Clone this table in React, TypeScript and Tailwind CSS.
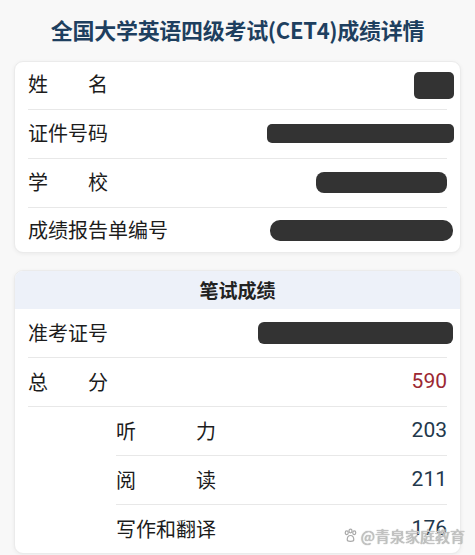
import React from 'react';

const Blot = ({ w, h, className = '' }: { w: string; h: string; className?: string }) => (
  <div className={`ml-auto ${w} ${h} bg-[#333333] rounded-[5px] ${className}`} />
);

const Paw = () => (
  <svg width="15" height="15" viewBox="0 0 16 16" className="mr-[3px]">
    <g fill="none" stroke="#a9a9a9" strokeWidth="1.3">
      <ellipse cx="4" cy="5" rx="1.6" ry="2" />
      <ellipse cx="8" cy="3.2" rx="1.6" ry="2" />
      <ellipse cx="12" cy="5" rx="1.6" ry="2" />
      <path d="M4.5 12.5c0-2.6 1.6-4.5 3.5-4.5s3.5 1.9 3.5 4.5c0 1.4-1.6 1.7-3.5 1.7s-3.5-.3-3.5-1.7z" />
    </g>
  </svg>
);

export default function App() {
  return (
    <div className="w-[475px] h-[555px] overflow-hidden bg-[#f8f8f8] font-['Noto_Sans_CJK_SC',sans-serif] text-[#1c1c1c]">
      {/* 标题 */}
      <div className="h-[61px] pt-[13px] text-center text-[22px] leading-[32px] font-bold text-[#1e3f5f] tracking-[-0.3px]">
        全国大学英语四级考试(CET4)成绩详情
      </div>

      {/* 个人信息 */}
      <div className="mx-[14px] bg-white border border-[#ebebeb] rounded-[9px] shadow-[0_1px_4px_rgba(0,0,0,0.06)] px-[13px]">
        <div className="h-[48px] flex items-center border-b border-[#e8e8e8] pb-[4px]">
          <span className="w-[80px] flex justify-between text-[20px]"><span>姓</span><span>名</span></span>
          <Blot w="w-[40px]" h="h-[27px]" className="mr-[-7px] mt-[3px]" />
        </div>
        <div className="h-[49px] flex items-center border-b border-[#e8e8e8] pb-[2px]">
          <span className="text-[20px]">证件号码</span>
          <Blot w="w-[187px]" h="h-[19px]" className="mr-[-7px]" />
        </div>
        <div className="h-[49px] flex items-center border-b border-[#e8e8e8] pb-[2px]">
          <span className="w-[80px] flex justify-between text-[20px]"><span>学</span><span>校</span></span>
          <Blot w="w-[131px]" h="h-[21px]" className="rounded-[8px]" />
        </div>
        <div className="h-[44px] flex items-center">
          <span className="text-[20px]">成绩报告单编号</span>
          <Blot w="w-[183px]" h="h-[21px]" className="mr-[-6px] rounded-[10px]" />
        </div>
      </div>

      {/* 笔试成绩 */}
      <div className="relative mt-[17px] mx-[14px] bg-white border border-[#ebebeb] rounded-[9px] shadow-[0_1px_4px_rgba(0,0,0,0.06)]">
        <div className="h-[38px] rounded-t-[8px] bg-[#edf1f9] flex items-center justify-center text-[19px] font-bold text-[#222]">
          笔试成绩
        </div>
        <div className="px-[13px]">
          <div className="h-[49px] flex items-center border-b border-[#e8e8e8]">
            <span className="text-[20px]">准考证号</span>
            <Blot w="w-[195px]" h="h-[22px]" className="mr-[-6px] rounded-[6px]" />
          </div>
          <div className="h-[49px] flex items-center border-b border-[#e8e8e8]">
            <span className="w-[80px] flex justify-between text-[20px]"><span>总</span><span>分</span></span>
            <span className="ml-auto text-[21px] font-['Roboto',sans-serif] text-[#9c2832]">590</span>
          </div>
          <div className="ml-[88px] h-[49px] flex items-center border-b border-[#e8e8e8]">
            <span className="w-[100px] flex justify-between text-[20px]"><span>听</span><span>力</span></span>
            <span className="ml-auto text-[21px] font-['Roboto',sans-serif] text-[#22384c]">203</span>
          </div>
          <div className="ml-[88px] h-[49px] flex items-center border-b border-[#e8e8e8]">
            <span className="w-[100px] flex justify-between text-[20px]"><span>阅</span><span>读</span></span>
            <span className="ml-auto text-[21px] font-['Roboto',sans-serif] text-[#22384c]">211</span>
          </div>
          <div className="ml-[88px] h-[48px] flex items-center">
            <span className="text-[20px]">写作和翻译</span>
            <span className="ml-auto text-[21px] font-['Roboto',sans-serif] text-[#22384c]">176</span>
          </div>
        </div>
        <div className="absolute right-[-5px] bottom-[10px] flex items-center text-[15px] leading-none text-[#c4c4c4] [text-shadow:0_0_1px_#8a8a8a]">
          <Paw />
          <span>@青泉家庭教育</span>
        </div>
      </div>
    </div>
  );
}
